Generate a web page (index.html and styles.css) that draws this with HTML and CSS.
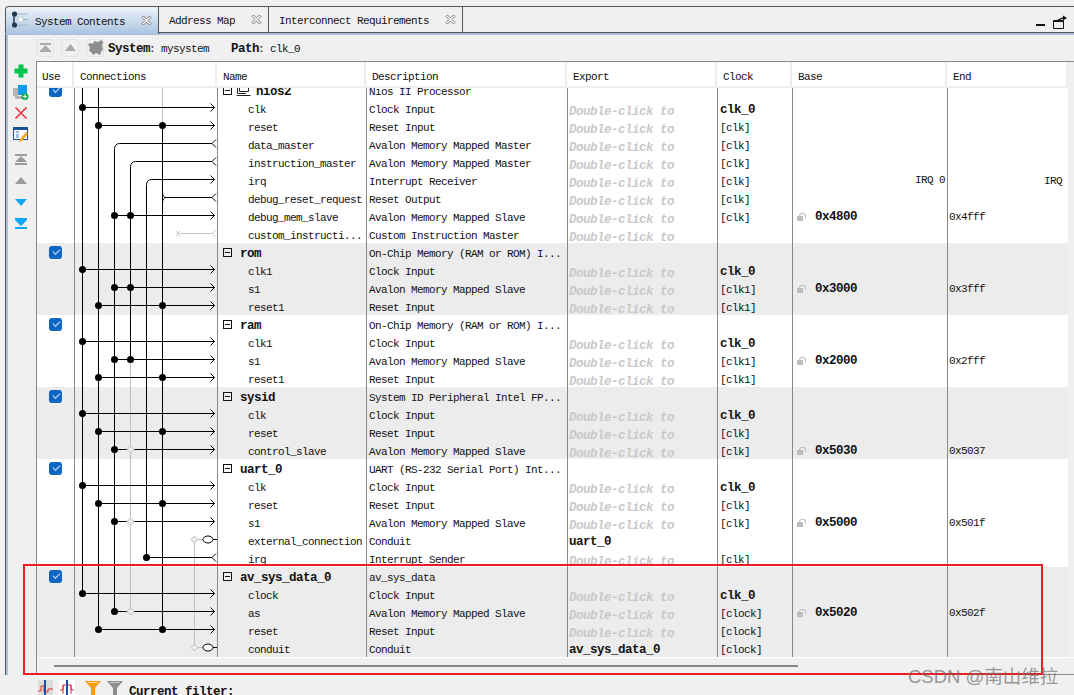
FILE: index.html
```html
<!DOCTYPE html>
<html lang="en">
<head>
<meta charset="UTF-8" />
<title>Platform Designer - System Contents</title>
<link rel="stylesheet" href="styles.css">
</head>
<body>

<div class="window">
  <div class="tabs">
    <div class="tab active">
      <svg class="tab-icon" width="18" height="18" viewBox="0 0 18 18">
        <path d="M2 3H16M2 3V14M2 14H16M8 8.500H16" stroke="#9fb2c6" fill="none"/>
        <rect x="6" y="6" width="5" height="5" fill="#fff" stroke="#b9c8d8"/>
        <path d="M2 3V14" stroke="#24384f" stroke-width="1.400"/>
        <circle cx="2.500" cy="3" r="2.600" fill="#24384f"/>
        <circle cx="2.500" cy="14" r="2.600" fill="#24384f"/>
      </svg>
      <span>System Contents</span>
      <svg class="close" width="11" height="11" viewBox="0 0 11 11"><path d="M1 2.500 2.500 1 5.500 4 8.500 1 10 2.500 7 5.500 10 8.500 8.500 10 5.500 7 2.500 10 1 8.500 4 5.500Z" fill="#fff" stroke="#777"/></svg>
    </div>
    <div class="tab map">
      <span>Address Map</span>
      <svg class="close" width="11" height="11" viewBox="0 0 11 11"><path d="M1 2.500 2.500 1 5.500 4 8.500 1 10 2.500 7 5.500 10 8.500 8.500 10 5.500 7 2.500 10 1 8.500 4 5.500Z" fill="#fff" stroke="#777"/></svg>
    </div>
    <div class="tab req">
      <span>Interconnect Requirements</span>
      <svg class="close" width="11" height="11" viewBox="0 0 11 11"><path d="M1 2.500 2.500 1 5.500 4 8.500 1 10 2.500 7 5.500 10 8.500 8.500 10 5.500 7 2.500 10 1 8.500 4 5.500Z" fill="#fff" stroke="#777"/></svg>
    </div>
    <div class="tab-tools">
      <svg class="dash" width="9" height="3" viewBox="0 0 9 3"><rect width="9" height="2" y="1" fill="#111"/></svg>
      <svg width="15" height="14" viewBox="0 0 15 14"><path d="M1.500 5.500H11.500V13.500H1.500ZM1.500 6.500H11.500" fill="none" stroke="#111"/><path d="M5 5 10 2.500H11V0.500L15 3 11 5.500V4H10L8 5Z" fill="#111"/></svg>
    </div>
  </div>

  <div class="main">
    <!-- Sol dikey araclar -->
    <div class="side">
      <svg width="16" height="16" viewBox="0 0 16 16"><path d="M5.500 1.500H10.500V5.500H14.500V10.500H10.500V14.500H5.500V10.500H1.500V5.500H5.500Z" fill="#00c44f"/></svg>
      <svg width="16" height="16" viewBox="0 0 16 16"><rect y="4" width="5" height="8" fill="#b5b5b5"/><rect x="2" y="12" width="10" height="3" fill="#b5b5b5"/><rect x="5" y="1" width="9" height="10" fill="#0d9cf0"/><circle cx="12" cy="12.500" r="3.500" fill="#10b14f"/><path d="M10 12.500H14M12 10.500V14.500" stroke="#fff"/></svg>
      <svg width="16" height="16" viewBox="0 0 16 16"><path d="M2.500 2.500 13.500 13.500M13.500 2.500 2.500 13.500" stroke="#ee3340" stroke-width="1.600"/></svg>
      <svg width="16" height="16" viewBox="0 0 16 16"><rect width="15" height="13" y="1" fill="#1c4f9c"/><rect x="1" y="4" width="13" height="9" fill="#fff"/><path d="M3 6H6M3 9H6M3 11H6" stroke="#3a78c8"/><path d="M7 13 13 6 15 8 9 15 6 16Z" fill="#f5a623"/></svg>
      <svg class="first-move" width="16" height="16" viewBox="0 0 16 16"><path d="M2 2H14V4H2ZM8 4 14 10H2ZM2 11H14V13H2Z" fill="#9a9a9a"/></svg>
      <svg width="16" height="16" viewBox="0 0 16 16"><path d="M8 4 14 11H2Z" fill="#9a9a9a"/></svg>
      <svg width="16" height="16" viewBox="0 0 16 16"><path d="M2 5H14L8 12Z" fill="#10a6f5"/></svg>
      <svg width="16" height="16" viewBox="0 0 16 16"><path d="M2 3H14V5H2ZM2 5H14L8 11ZM2 12H14V14H2Z" fill="#10a6f5"/></svg>
    </div>

    <div class="content">
      <div class="toolbar">
        <button class="tool"><svg width="11" height="9" viewBox="0 0 11 9"><path d="M0 0H11V2H0ZM5.500 2 10 7H1ZM0 7H11V9H0Z" fill="#aaa"/></svg></button>
        <button class="tool"><svg width="11" height="7" viewBox="0 0 11 7"><path d="M5.500 0 11 7H0Z" fill="#aaa"/></svg></button>
        <button class="tool"><svg width="15" height="15" viewBox="0 0 15 15"><path d="M0 4 3 3 5 4 6 1 10 2 13 0 15 2 14 6 15 9 13 12 12 15 8 13 5 15 3 12 1 11 2 8Z" fill="#8e8e8e"/></svg></button>
        <span class="crumb"><b>System</b>: mysystem</span>
        <span class="crumb path"><b>Path</b>: clk_0</span>
      </div>

      <div class="grid">
        <div class="row head">
          <span>Use</span><span>Connections</span><span>Name</span><span>Description</span><span>Export</span><span>Clock</span><span>Base</span><span>End</span>
        </div>

        <div class="body">
          <div class="rows">
            <div class="row"><span class="use"><i class="check"></i></span><span class="conn"></span><span class="name comp"><i class="box"></i><svg class="chip" width="15" height="12" viewBox="0 0 15 12"><path d="M3.500 .5H12.500V7.500H3.500ZM1.500 3.500V9.500H10M.5 11.500H14.500" fill="none" stroke="#222"/></svg><b>nios2</b></span><span class="desc">Nios II Processor</span><span class="exp"></span><span class="clk"></span><span class="base"></span><span class="end"></span></div>
            <div class="row"><span class="use"></span><span class="conn"></span><span class="name">clk</span><span class="desc">Clock Input</span><span class="exp"><em>Double-click to</em></span><span class="clk"><b>clk_0</b></span><span class="base"></span><span class="end"></span></div>
            <div class="row"><span class="use"></span><span class="conn"></span><span class="name">reset</span><span class="desc">Reset Input</span><span class="exp"><em>Double-click to</em></span><span class="clk">[clk]</span><span class="base"></span><span class="end"></span></div>
            <div class="row"><span class="use"></span><span class="conn"></span><span class="name">data_master</span><span class="desc">Avalon Memory Mapped Master</span><span class="exp"><em>Double-click to</em></span><span class="clk">[clk]</span><span class="base"></span><span class="end"></span></div>
            <div class="row"><span class="use"></span><span class="conn"></span><span class="name">instruction_master</span><span class="desc">Avalon Memory Mapped Master</span><span class="exp"><em>Double-click to</em></span><span class="clk">[clk]</span><span class="base"></span><span class="end"></span></div>
            <div class="row"><span class="use"></span><span class="conn"></span><span class="name">irq</span><span class="desc">Interrupt Receiver</span><span class="exp"><em>Double-click to</em></span><span class="clk">[clk]</span><span class="base irq">IRQ 0</span><span class="end irq">IRQ</span></div>
            <div class="row"><span class="use"></span><span class="conn"></span><span class="name">debug_reset_request</span><span class="desc">Reset Output</span><span class="exp"><em>Double-click to</em></span><span class="clk">[clk]</span><span class="base"></span><span class="end"></span></div>
            <div class="row"><span class="use"></span><span class="conn"></span><span class="name">debug_mem_slave</span><span class="desc">Avalon Memory Mapped Slave</span><span class="exp"><em>Double-click to</em></span><span class="clk">[clk]</span><span class="base"><i class="lock"></i><b>0x4800</b></span><span class="end">0x4fff</span></div>
            <div class="row"><span class="use"></span><span class="conn"></span><span class="name">custom_instructi...</span><span class="desc">Custom Instruction Master</span><span class="exp"><em>Double-click to</em></span><span class="clk"></span><span class="base"></span><span class="end"></span></div>

            <div class="row tint"><span class="use"><i class="check"></i></span><span class="conn"></span><span class="name comp"><i class="box"></i><b>rom</b></span><span class="desc">On-Chip Memory (RAM or ROM) I...</span><span class="exp"></span><span class="clk"></span><span class="base"></span><span class="end"></span></div>
            <div class="row tint"><span class="use"></span><span class="conn"></span><span class="name">clk1</span><span class="desc">Clock Input</span><span class="exp"><em>Double-click to</em></span><span class="clk"><b>clk_0</b></span><span class="base"></span><span class="end"></span></div>
            <div class="row tint"><span class="use"></span><span class="conn"></span><span class="name">s1</span><span class="desc">Avalon Memory Mapped Slave</span><span class="exp"><em>Double-click to</em></span><span class="clk">[clk1]</span><span class="base"><i class="lock"></i><b>0x3000</b></span><span class="end">0x3fff</span></div>
            <div class="row tint"><span class="use"></span><span class="conn"></span><span class="name">reset1</span><span class="desc">Reset Input</span><span class="exp"><em>Double-click to</em></span><span class="clk">[clk1]</span><span class="base"></span><span class="end"></span></div>

            <div class="row"><span class="use"><i class="check"></i></span><span class="conn"></span><span class="name comp"><i class="box"></i><b>ram</b></span><span class="desc">On-Chip Memory (RAM or ROM) I...</span><span class="exp"></span><span class="clk"></span><span class="base"></span><span class="end"></span></div>
            <div class="row"><span class="use"></span><span class="conn"></span><span class="name">clk1</span><span class="desc">Clock Input</span><span class="exp"><em>Double-click to</em></span><span class="clk"><b>clk_0</b></span><span class="base"></span><span class="end"></span></div>
            <div class="row"><span class="use"></span><span class="conn"></span><span class="name">s1</span><span class="desc">Avalon Memory Mapped Slave</span><span class="exp"><em>Double-click to</em></span><span class="clk">[clk1]</span><span class="base"><i class="lock"></i><b>0x2000</b></span><span class="end">0x2fff</span></div>
            <div class="row"><span class="use"></span><span class="conn"></span><span class="name">reset1</span><span class="desc">Reset Input</span><span class="exp"><em>Double-click to</em></span><span class="clk">[clk1]</span><span class="base"></span><span class="end"></span></div>

            <div class="row tint"><span class="use"><i class="check"></i></span><span class="conn"></span><span class="name comp"><i class="box"></i><b>sysid</b></span><span class="desc">System ID Peripheral Intel FP...</span><span class="exp"></span><span class="clk"></span><span class="base"></span><span class="end"></span></div>
            <div class="row tint"><span class="use"></span><span class="conn"></span><span class="name">clk</span><span class="desc">Clock Input</span><span class="exp"><em>Double-click to</em></span><span class="clk"><b>clk_0</b></span><span class="base"></span><span class="end"></span></div>
            <div class="row tint"><span class="use"></span><span class="conn"></span><span class="name">reset</span><span class="desc">Reset Input</span><span class="exp"><em>Double-click to</em></span><span class="clk">[clk]</span><span class="base"></span><span class="end"></span></div>
            <div class="row tint"><span class="use"></span><span class="conn"></span><span class="name">control_slave</span><span class="desc">Avalon Memory Mapped Slave</span><span class="exp"><em>Double-click to</em></span><span class="clk">[clk]</span><span class="base"><i class="lock"></i><b>0x5030</b></span><span class="end">0x5037</span></div>

            <div class="row"><span class="use"><i class="check"></i></span><span class="conn"></span><span class="name comp"><i class="box"></i><b>uart_0</b></span><span class="desc">UART (RS-232 Serial Port) Int...</span><span class="exp"></span><span class="clk"></span><span class="base"></span><span class="end"></span></div>
            <div class="row"><span class="use"></span><span class="conn"></span><span class="name">clk</span><span class="desc">Clock Input</span><span class="exp"><em>Double-click to</em></span><span class="clk"><b>clk_0</b></span><span class="base"></span><span class="end"></span></div>
            <div class="row"><span class="use"></span><span class="conn"></span><span class="name">reset</span><span class="desc">Reset Input</span><span class="exp"><em>Double-click to</em></span><span class="clk">[clk]</span><span class="base"></span><span class="end"></span></div>
            <div class="row"><span class="use"></span><span class="conn"></span><span class="name">s1</span><span class="desc">Avalon Memory Mapped Slave</span><span class="exp"><em>Double-click to</em></span><span class="clk">[clk]</span><span class="base"><i class="lock"></i><b>0x5000</b></span><span class="end">0x501f</span></div>
            <div class="row"><span class="use"></span><span class="conn"></span><span class="name">external_connection</span><span class="desc">Conduit</span><span class="exp"><b>uart_0</b></span><span class="clk"></span><span class="base"></span><span class="end"></span></div>
            <div class="row"><span class="use"></span><span class="conn"></span><span class="name">irq</span><span class="desc">Interrupt Sender</span><span class="exp"><em>Double-click to</em></span><span class="clk">[clk]</span><span class="base"></span><span class="end"></span></div>

            <div class="row tint"><span class="use"><i class="check"></i></span><span class="conn"></span><span class="name comp"><i class="box"></i><b>av_sys_data_0</b></span><span class="desc">av_sys_data</span><span class="exp"></span><span class="clk"></span><span class="base"></span><span class="end"></span></div>
            <div class="row tint"><span class="use"></span><span class="conn"></span><span class="name">clock</span><span class="desc">Clock Input</span><span class="exp"><em>Double-click to</em></span><span class="clk"><b>clk_0</b></span><span class="base"></span><span class="end"></span></div>
            <div class="row tint"><span class="use"></span><span class="conn"></span><span class="name">as</span><span class="desc">Avalon Memory Mapped Slave</span><span class="exp"><em>Double-click to</em></span><span class="clk">[clock]</span><span class="base"><i class="lock"></i><b>0x5020</b></span><span class="end">0x502f</span></div>
            <div class="row tint"><span class="use"></span><span class="conn"></span><span class="name">reset</span><span class="desc">Reset Input</span><span class="exp"><em>Double-click to</em></span><span class="clk">[clock]</span><span class="base"></span><span class="end"></span></div>
            <div class="row tint"><span class="use"></span><span class="conn"></span><span class="name">conduit</span><span class="desc">Conduit</span><span class="exp"><b>av_sys_data_0</b></span><span class="clk">[clock]</span><span class="base"></span><span class="end"></span></div>
          </div>

          <!-- Baglanti semasi: koordinatlar sayfa pikselleriyle ayni -->
          <svg class="wires" width="143" height="569" viewBox="74 88 143 569">
            <path class="off" d="M162.500 88V125.500M130.500 359.500V611.500M194.500 539.500V647.500M194.500 539.500H203M194.500 647.500H203"/>
            <path class="faint" d="M180 233.500H212m4-4l-4 4 4 4M176 231l4 5m0-5l-4 5"/>
            <path class="wire" d="M82.500 88V593.500M98.500 88V629.500M162.500 125.500V629.500
              M114.500 611.500V148.500a5 5 0 0 1 5-5H212m4-4l-4 4 4 4
              M130.500 359.500V166.500a5 5 0 0 1 5-5H212m4-4l-4 4 4 4
              M146.500 557.500V184.500a5 5 0 0 1 5-5H214.500m-4-4l4 4-4 4
              M146.500 557.500H212m4-4l-4 4 4 4
              M162.500 192q0 5.500 4 5.500H212m4-4l-4 4 4 4M166.500 197.500q-4 0-4 5.500
              M82.500 107.500H214.500m-4-4l4 4-4 4M82.500 269.500H214.500m-4-4l4 4-4 4M82.500 341.500H214.500m-4-4l4 4-4 4
              M82.500 413.500H214.500m-4-4l4 4-4 4M82.500 485.500H214.500m-4-4l4 4-4 4M82.500 593.500H214.500m-4-4l4 4-4 4
              M98.500 125.500H214.500m-4-4l4 4-4 4M98.500 305.500H214.500m-4-4l4 4-4 4M98.500 377.500H214.500m-4-4l4 4-4 4
              M98.500 431.500H214.500m-4-4l4 4-4 4M98.500 503.500H214.500m-4-4l4 4-4 4M98.500 629.500H214.500m-4-4l4 4-4 4
              M114.500 215.500H214.500m-4-4l4 4-4 4M114.500 287.500H214.500m-4-4l4 4-4 4M114.500 359.500H214.500m-4-4l4 4-4 4
              M114.500 449.500H214.500m-4-4l4 4-4 4M114.500 521.500H214.500m-4-4l4 4-4 4M114.500 611.500H214.500m-4-4l4 4-4 4
              M213 539.500H217M213 647.500H217"/>
            <path class="dots" d="M82.500 107.500h0M82.500 269.500h0M82.500 341.500h0M82.500 413.500h0M82.500 485.500h0M82.500 593.500h0
              M98.500 125.500h0M98.500 305.500h0M98.500 377.500h0M98.500 431.500h0M98.500 503.500h0M98.500 629.500h0
              M162.500 125.500h0M162.500 305.500h0M162.500 377.500h0M162.500 431.500h0M162.500 503.500h0M162.500 629.500h0
              M114.500 215.500h0M114.500 287.500h0M114.500 359.500h0M114.500 449.500h0M114.500 521.500h0M114.500 611.500h0
              M130.500 215.500h0M130.500 287.500h0M130.500 359.500h0M146.500 557.500h0"/>
            <path class="open" d="M130.500 446l3.500 3.500-3.500 3.500-3.500-3.500zM130.500 518l3.500 3.500-3.500 3.500-3.500-3.500zM130.500 608l3.500 3.500-3.500 3.500-3.500-3.500zM194.500 536l3.500 3.500-3.500 3.500-3.500-3.500zM194.500 644l3.500 3.500-3.500 3.500-3.500-3.500z"/>
            <ellipse class="oval" cx="208" cy="539.500" rx="5" ry="3.500"/>
            <ellipse class="oval" cx="208" cy="647.500" rx="5" ry="3.500"/>
          </svg>
        </div>

        <div class="scroll"><div class="thumb"></div></div>
      </div>
    </div>
  </div>

  <div class="filter">
    <svg width="15" height="15" viewBox="0 0 15 15"><rect width="15" height="15" fill="#dcdcdc"/><path d="M0 11H3V6H6V12H10V9H15" fill="none" stroke="#e0312a"/><rect x="6" width="2" height="15" fill="#1c4f9c"/></svg>
    <svg width="16" height="15" viewBox="0 0 16 15"><rect width="16" height="15" fill="#fff"/><path d="M1 10H4V5H12V10H15M4 5V14M12 5V14" fill="none" stroke="#e0312a"/><rect x="7" width="2" height="15" fill="#1c4f9c"/></svg>
    <svg class="funnel" width="16" height="15" viewBox="0 0 16 15"><path d="M0 1H16L10 8V15H6V8Z" fill="#f79a16"/><path d="M3 2.500H13" stroke="#ffd48a"/></svg>
    <svg width="16" height="15" viewBox="0 0 16 15"><path d="M0 1H16L10 8V15H6V8Z" fill="#8d8d8d"/><path d="M3 2.500H13" stroke="#c8c8c8"/></svg>
    <b>Current filter:</b>
  </div>
</div>

<div class="highlight"></div>
<div class="watermark">CSDN @南山维拉</div>

</body>
</html>
```

FILE: styles.css
```css
* {
  box-sizing: border-box;
}
html, body {
  height: 100%;
}
body {
  margin: 0;
  overflow: hidden;
  position: relative;
  background: #f0f0f0;
  color: #111;
  font-family: "Liberation Mono", monospace;
  font-size: 11px;
  letter-spacing: -0.6px;
}
b {
  font-size: 12.5px;
  font-weight: bold;
  letter-spacing: -0.5px;
}

.window {
  padding: 6px 0 0 5px;
}

/* Sekmeler */
.tabs {
  display: flex;
  height: 27px;
  border-top: 1px solid #555;
  border-bottom: 1px solid #555;
  border-left: 1px solid #555;
  border-top-left-radius: 4px;
}
.tab {
  display: flex;
  align-items: center;
  height: 26px;
  padding-top: 2px;
  border-right: 1px solid #555;
}
.tab span {
  flex-grow: 1;
}
.tab.active {
  width: 153px;
  height: 27px;
  padding-left: 6px;
  border-top-left-radius: 4px;
  background: linear-gradient(#eef3f8, #a9c4e0);
}
.tab.map {
  width: 110px;
  padding-left: 10px;
}
.tab.req {
  width: 194px;
  padding-left: 10px;
}
.tab-icon {
  margin: -3px 5px 0 0;
}
.close {
  margin: -3px 6px 0 0;
}
.tab-tools {
  display: flex;
  align-items: center;
  gap: 7px;
  margin-left: auto;
  padding: 4px 7px 0 0;
}
.dash {
  margin-top: 5px;
}

.main {
  display: flex;
  border-top: 2px solid #a9c0dc;
  border-left: 1px solid #555;
}

/* Sol arac cubugu */
.side {
  width: 30px;
  padding: 28px 0 0 7px;
  display: flex;
  flex-direction: column;
  gap: 5px;
  background: linear-gradient(90deg, #a9c0dc 2px, #f0f0f0 2px);
}
.first-move {
  margin-top: 5px;
}

.content {
  width: 1038px;
}
.toolbar {
  display: flex;
  align-items: center;
  height: 26px;
  padding-bottom: 1px;
  gap: 6px;
}
.tool {
  display: flex;
  align-items: center;
  justify-content: center;
  width: 18px;
  height: 18px;
  margin-right: 1px;
  padding: 0;
  border: 1px solid #e2e2e2;
  border-radius: 4px;
  background: #f0f0f0;
}
.tool:nth-child(3) {
  margin-right: -2px;
}
.crumb {
  margin-top: 2px;
}
.crumb b {
  margin-right: -1px;
}
.crumb.path {
  margin-left: 16px;
}

.grid {
  border-top: 1px solid #888;
  border-left: 1px solid #888;
  border-bottom: 1px solid #888;
}
.row {
  display: grid;
  grid-template-columns: 37px 143px 149px 201px 150px 75px 155px 121px;
  width: 1031px;
  height: 18px;
  line-height: 22px;
  background: #fff;
  white-space: nowrap;
}
.row.tint {
  background: #ececec;
}
.row span {
  display: block;
  height: 18px;
  border-left: 1px solid #888;
}

/* Baslik satiri */
.row.head {
  height: 26px;
  line-height: 31px;
  border-bottom: 2px solid #ededed;
}
.row.head span {
  height: 24px;
  padding-left: 6px;
  border-left: none;
  border-right: 2px solid #ededed;
}
.row.head span:first-child {
  padding-left: 5px;
}

.body {
  position: relative;
  height: 569px;
  overflow: hidden;
}
.rows {
  margin-top: -7px;
}
.row .use {
  border-left: none;
  padding: 3px 0 0 12px;
}
.check {
  display: block;
  width: 13px;
  height: 13px;
  border-radius: 3px;
  background: #0e66c2;
  position: relative;
}
.check::after {
  content: "";
  position: absolute;
  left: 3.500px;
  top: 3px;
  width: 6px;
  height: 3px;
  border-left: 1px solid #cfe2f7;
  border-bottom: 1px solid #cfe2f7;
  transform: rotate(-45deg);
}
.name {
  padding-left: 30px;
}
.name.comp {
  display: flex !important;
  align-items: flex-start;
  padding-left: 5px;
}
.box {
  flex-shrink: 0;
  width: 9px;
  height: 9px;
  margin: 5px 8px 0 0;
  background: linear-gradient(#111, #111) center / 5px 1px no-repeat;
  border: 1px solid #111;
}
.chip {
  margin: 3px 5px 0 -4px;
}
.desc {
  padding-left: 2px;
}
.exp {
  padding-left: 1px;
}
.exp em {
  display: block;
  height: 18px;
  color: #c9c9c9;
  font-size: 12.5px;
  font-weight: bold;
  font-style: italic;
  letter-spacing: -0.5px;
  line-height: 27px;
}
.clk {
  padding-left: 2px;
}
.base {
  display: flex !important;
  align-items: center;
  padding-left: 4px;
}
.base b {
  margin-top: 2px;
  line-height: 20px;
}
.base.irq {
  justify-content: flex-end;
  padding-right: 2px;
  line-height: 20px;
}
.end {
  padding-left: 1px;
  line-height: 20px;
}
.end.irq {
  text-align: right;
  padding-right: 6px;
}
.lock {
  position: relative;
  width: 6px;
  height: 5px;
  margin: 4px 12px 0 0;
  background: #bdbdbd;
}
.lock::before {
  content: "";
  position: absolute;
  left: 2px;
  top: -3px;
  width: 5px;
  height: 4px;
  border: 1px solid #bdbdbd;
  border-bottom: none;
  border-radius: 3px 3px 0 0;
}

/* Baglanti semasi */
.wires {
  position: absolute;
  left: 37px;
  top: 0;
}
.wires path {
  fill: none;
}
.wire {
  stroke: #000;
}
.off {
  stroke: #bdbdbd;
}
.faint {
  stroke: #c8c8c8;
}
.wires .dots {
  stroke: #000;
  stroke-width: 7;
  stroke-linecap: round;
}
.wires .open {
  fill: #eee;
  stroke: #bdbdbd;
}
.oval {
  fill: #fff;
  stroke: #000;
}

.scroll {
  height: 17px;
  padding: 7px 0 0 17px;
  border-top: 1px solid #fff;
}
.thumb {
  width: 744px;
  height: 2px;
  background: #888;
}

/* Alt filtre satiri */
.filter {
  display: flex;
  align-items: flex-start;
  gap: 6px;
  padding: 5px 0 0 33px;
}
.filter .funnel {
  margin-left: 4px;
}
.filter b {
  margin-top: 5px;
}

.highlight {
  position: absolute;
  left: 23px;
  top: 564px;
  width: 1020px;
  height: 111px;
  border: 2px solid #ed1c24;
}
.watermark {
  position: absolute;
  left: 908px;
  top: 665px;
  color: rgba(110, 110, 110, 0.7);
  font-family: "Liberation Sans", "Noto Sans CJK SC", sans-serif;
  font-size: 18.500px;
  letter-spacing: 0;
  line-height: 24px;
  white-space: nowrap;
}
```
